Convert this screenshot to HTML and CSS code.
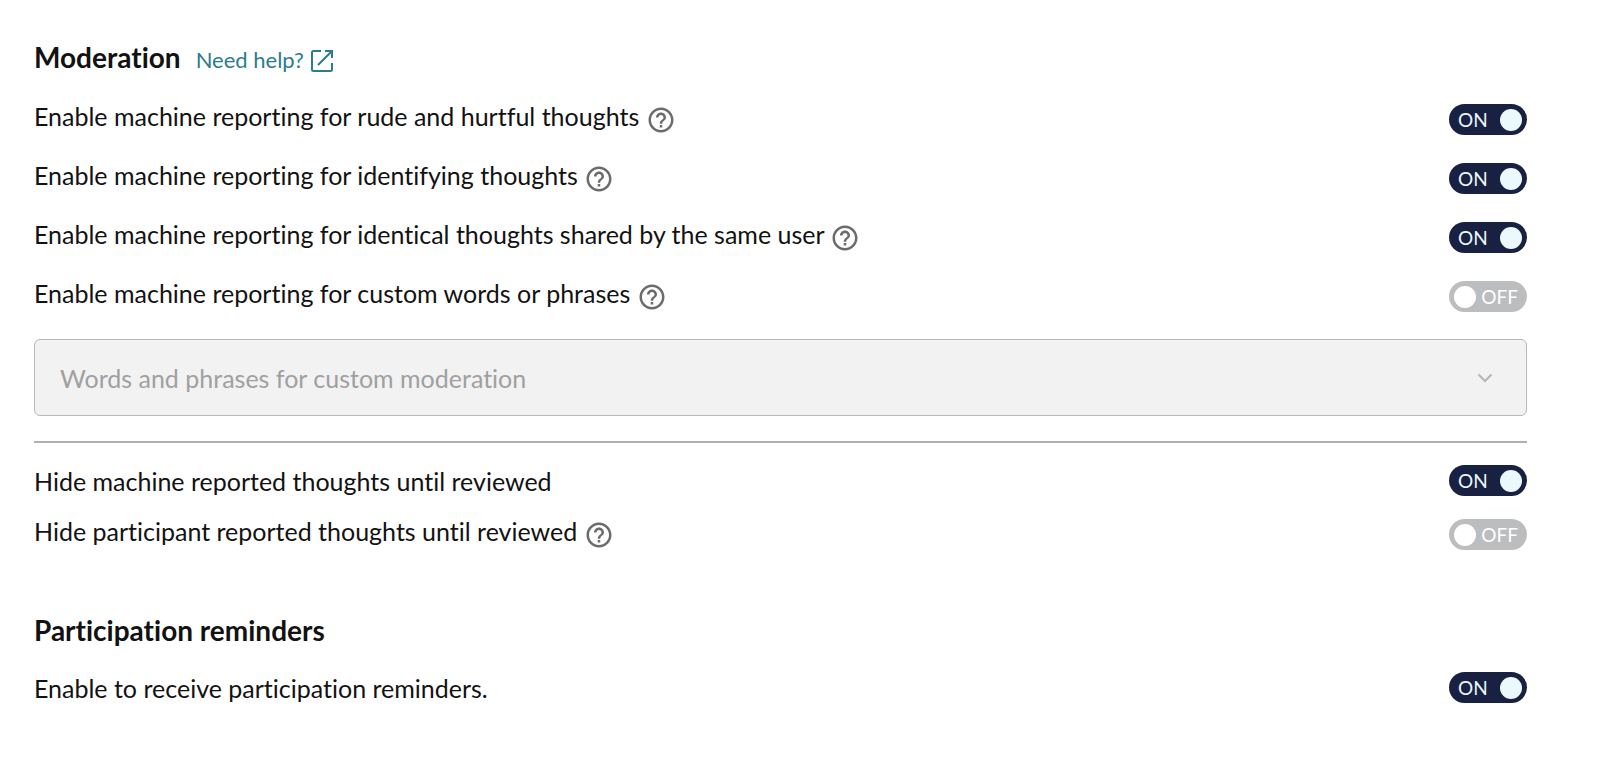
FILE: index.html
```html
<!DOCTYPE html>
<html lang="en">
<head>
<meta charset="utf-8">
<title>Moderation settings</title>
<link rel="stylesheet" href="styles.css">
</head>
<body>
<svg class="sprite" aria-hidden="true">
  <symbol id="help" viewBox="0 0 24 24"><path d="M11 18h2v-2h-2v2zm1-16C6.480 2 2 6.480 2 12s4.480 10 10 10 10-4.480 10-10S17.520 2 12 2zm0 18c-4.410 0-8-3.590-8-8s3.590-8 8-8 8 3.590 8 8-3.590 8-8 8zm0-14c-2.210 0-4 1.790-4 4h2c0-1.100.9-2 2-2s2 .9 2 2c0 2-3 1.750-3 5h2c0-2.250 3-2.500 3-5 0-2.210-1.790-4-4-4z"/></symbol>
</svg>
<main class="settings">
  <section>
    <header class="heading with-link">
      <h2 class="title">Moderation</h2>
      <a class="help-link" href="#">Need help?
        <svg class="external" viewBox="0 0 24 24" aria-hidden="true"><path d="M11 2H3.500Q2 2 2 3.500v17Q2 22 3.500 22h17q1.500 0 1.500-1.500V14M15 2h7v7M22 2 8 16"/></svg>
      </a>
    </header>
    <div class="rows">
      <div class="row">
        <label class="label" for="rude">Enable machine reporting for rude and hurtful thoughts <svg class="help" aria-hidden="true"><use href="#help"/></svg></label>
        <div class="toggle on"><span>ON</span><input class="knob" type="checkbox" id="rude" checked></div>
      </div>
      <div class="row">
        <label class="label" for="identifying">Enable machine reporting for identifying thoughts <svg class="help" aria-hidden="true"><use href="#help"/></svg></label>
        <div class="toggle on"><span>ON</span><input class="knob" type="checkbox" id="identifying" checked></div>
      </div>
      <div class="row">
        <label class="label" for="identical">Enable machine reporting for identical thoughts shared by the same user <svg class="help" aria-hidden="true"><use href="#help"/></svg></label>
        <div class="toggle on"><span>ON</span><input class="knob" type="checkbox" id="identical" checked></div>
      </div>
      <div class="row">
        <label class="label" for="custom">Enable machine reporting for custom words or phrases <svg class="help" aria-hidden="true"><use href="#help"/></svg></label>
        <div class="toggle"><input class="knob" type="checkbox" id="custom"><span>OFF</span></div>
      </div>
    </div>
    <div class="picker">
      <select class="select" aria-label="Words and phrases for custom moderation" disabled>
        <option>Words and phrases for custom moderation</option>
      </select>
      <svg class="chevron" viewBox="0 0 16 10" aria-hidden="true"><path d="M1.500 1.500 8 8l6.500-6.500"/></svg>
    </div>
    <div class="rows review">
      <div class="row">
        <label class="label" for="machine">Hide machine reported thoughts until reviewed</label>
        <div class="toggle on"><span>ON</span><input class="knob" type="checkbox" id="machine" checked></div>
      </div>
      <div class="row">
        <label class="label" for="participant">Hide participant reported thoughts until reviewed <svg class="help" aria-hidden="true"><use href="#help"/></svg></label>
        <div class="toggle"><input class="knob" type="checkbox" id="participant"><span>OFF</span></div>
      </div>
    </div>
  </section>
  <section>
    <header class="heading">
      <h2 class="title">Participation reminders</h2>
    </header>
    <div class="row">
      <label class="label" for="reminders">Enable to receive participation reminders.</label>
      <div class="toggle on"><span>ON</span><input class="knob" type="checkbox" id="reminders" checked></div>
    </div>
  </section>
</main>
</body>
</html>
```
FILE: styles.css
```css
* {
  box-sizing: border-box;
}

body {
  margin: 0;
  background: #fff;
  color: #121212;
  font-family: Lato, "Liberation Sans", sans-serif;
  font-size: 25px;
  line-height: 24px;
  font-variant-ligatures: none;
}

.sprite {
  display: none;
}

.settings {
  display: flex;
  flex-direction: column;
  gap: 63px;
  padding: 40px 73px 40px 34px;
}

.heading {
  display: flex;
  align-items: baseline;
  gap: 15px;
  margin-bottom: 25px;
}

.with-link {
  margin-bottom: 30px;
}

.title {
  margin: 0;
  font-size: 28px;
  line-height: 34px;
  font-weight: 700;
}

.help-link {
  color: #2b7d8c;
  font-size: 22px;
  text-decoration: none;
}

.external {
  width: 24px;
  height: 24px;
  vertical-align: text-bottom;
  fill: none;
  stroke: currentColor;
  stroke-width: 2;
}

.rows {
  display: flex;
  flex-direction: column;
  gap: 28px;
}

.row {
  display: flex;
  align-items: center;
  justify-content: space-between;
  min-height: 31px;
}

.help {
  width: 30px;
  height: 30px;
  vertical-align: middle;
  fill: #6b6b6b;
}

.toggle {
  display: flex;
  align-items: center;
  justify-content: space-between;
  width: 78px;
  height: 31px;
  padding: 0 9px 0 5px;
  border-radius: 16px;
  background: #bbbdbe;
  color: #fff;
  font-size: 19px;
}

.toggle.on {
  padding: 0 5px 0 9px;
  background: #182142;
  color: #ebf8fc;
}

.knob {
  appearance: none;
  width: 22px;
  height: 22px;
  margin: 0;
  border-radius: 50%;
  background: #fff;
}

.knob:checked {
  background: #ebf8fc;
}

.picker {
  display: grid;
  align-items: center;
  margin: 27px 0 25px;
}

.select,
.chevron {
  grid-area: 1 / 1;
}

.select {
  appearance: none;
  width: 100%;
  height: 77px;
  padding: 0 25px;
  border: 1px solid #b8b8b8;
  border-radius: 6px;
  background: #f2f2f2;
  color: #a0a0a0;
  font: inherit;
  line-height: normal;
  font-variant-ligatures: none;
  opacity: 1;
}

.chevron {
  justify-self: end;
  width: 16px;
  height: 10px;
  margin-right: 34px;
  pointer-events: none;
  fill: none;
  stroke: #b5b5b5;
  stroke-width: 2;
}

.review {
  gap: 23px;
  padding-top: 22px;
  border-top: 2px solid #b0b0b0;
}
```
